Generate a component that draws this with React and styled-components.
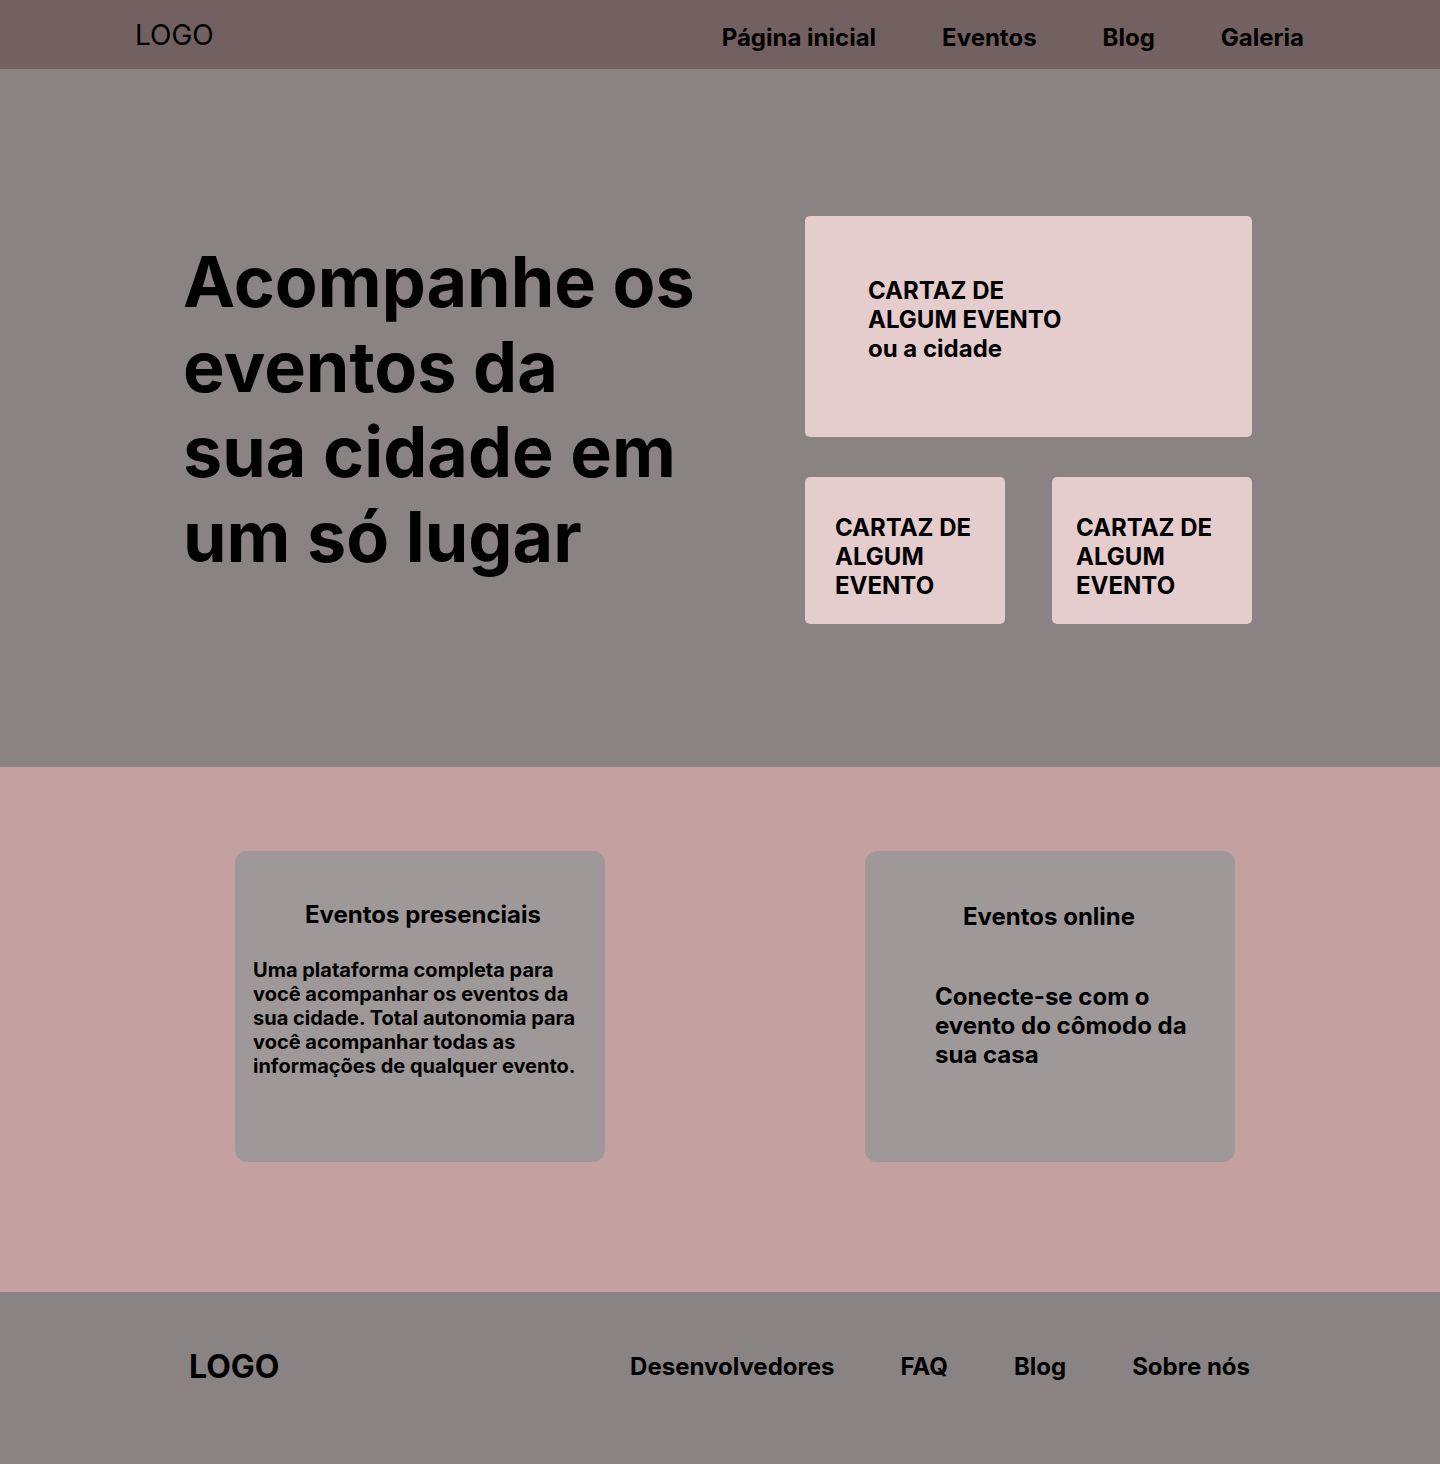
import React from "react";
import styled, { createGlobalStyle } from "styled-components";

const GlobalStyle = createGlobalStyle`
  *, *::before, *::after { box-sizing: border-box; }
  body {
    margin: 0;
    background: #898383;
    color: #000;
    font-family: Inter, "Liberation Sans", sans-serif;
  }
  h1, h2, p { margin: 0; padding: 0; }
`;

const Header = styled.header`
  display: flex;
  align-items: flex-end;
  justify-content: space-between;
  flex-wrap: wrap;
  min-height: 69px;
  padding: 0 136px 17px 135px;
  background: #736060;
`;

const Logo = styled.a`
  color: inherit;
  text-decoration: none;
  font-size: ${(p) => (p.$bold ? 32 : 28)}px;
  line-height: ${(p) => (p.$bold ? 39 : 34)}px;
  font-weight: ${(p) => (p.$bold ? 700 : 400)};
`;

const NavLinks = styled.nav`
  display: flex;
  flex-wrap: wrap;
  gap: 0 66px;
`;

const NavLink = styled.a`
  color: inherit;
  text-decoration: none;
  font-size: 24px;
  line-height: 29px;
  font-weight: 700;
`;

const Hero = styled.section`
  display: flex;
  justify-content: space-between;
  gap: 40px;
  padding: 147px 188px 143px 183px;
  background: #898383;
`;

const HeroTitle = styled.h1`
  max-width: 540px;
  padding-top: 23px;
  font-size: 70px;
  line-height: 85px;
  font-weight: 700;
`;

const Posters = styled.div`
  display: grid;
  grid-template-columns: 200px 200px;
  gap: 40px 47px;
  align-content: start;
`;

const Poster = styled.article`
  min-height: ${(p) => (p.$wide ? 221 : 147)}px;
  grid-column: ${(p) => (p.$wide ? "1 / -1" : "auto")};
  padding: ${(p) => p.$pad};
  border-radius: 5px;
  background: #e5cdcd;
  font-size: 24px;
  line-height: 29px;
  font-weight: 700;
`;

const Features = styled.section`
  display: flex;
  justify-content: space-between;
  align-items: flex-start;
  gap: 40px;
  padding: 84px 205px 130px 235px;
  background: #c4a0a0;
`;

const Feature = styled.article`
  width: 370px;
  min-height: 311px;
  padding: ${(p) => p.$pad};
  border-radius: 12px;
  background: #9e9898;
`;

const FeatureTitle = styled.h2`
  padding-left: ${(p) => p.$indent}px;
  font-size: 24px;
  line-height: 29px;
  font-weight: 700;
`;

const FeatureText = styled.p`
  margin-top: ${(p) => (p.$large ? 51 : 29)}px;
  font-size: ${(p) => (p.$large ? 24 : 20)}px;
  line-height: ${(p) => (p.$large ? 29 : 24)}px;
  font-weight: 700;
`;

const Footer = styled.footer`
  display: flex;
  align-items: center;
  justify-content: space-between;
  flex-wrap: wrap;
  padding: 55px 190px 78px 189px;
  background: #898383;
`;

export default function App() {
  return (
    <>
      <GlobalStyle />
      <Header>
        <Logo href="#">LOGO</Logo>
        <NavLinks aria-label="Principal">
          <NavLink href="#">Página inicial</NavLink>
          <NavLink href="#eventos">Eventos</NavLink>
          <NavLink href="#blog">Blog</NavLink>
          <NavLink href="#galeria">Galeria</NavLink>
        </NavLinks>
      </Header>
      <main>
        <Hero>
          <HeroTitle>
            Acompanhe os<br />eventos da<br />sua cidade em<br />um só lugar
          </HeroTitle>
          <Posters>
            <Poster $wide $pad="60px 63px">
              CARTAZ DE<br />ALGUM EVENTO<br />ou a cidade
            </Poster>
            <Poster $pad="36px 20px 24px 30px">CARTAZ DE ALGUM EVENTO</Poster>
            <Poster $pad="36px 24px 24px">CARTAZ DE ALGUM EVENTO</Poster>
          </Posters>
        </Hero>
        <Features id="eventos">
          <Feature $pad="49px 18px">
            <FeatureTitle $indent={52}>Eventos presenciais</FeatureTitle>
            <FeatureText>
              Uma plataforma completa para você acompanhar os eventos da sua
              cidade. Total autonomia para você acompanhar todas as
              informações de qualquer evento.
            </FeatureText>
          </Feature>
          <Feature $pad="51px 40px 51px 70px">
            <FeatureTitle $indent={28}>Eventos online</FeatureTitle>
            <FeatureText $large>
              Conecte-se com o evento do cômodo da sua casa
            </FeatureText>
          </Feature>
        </Features>
      </main>
      <Footer>
        <Logo $bold href="#">LOGO</Logo>
        <NavLinks aria-label="Rodapé">
          <NavLink href="#desenvolvedores">Desenvolvedores</NavLink>
          <NavLink href="#faq">FAQ</NavLink>
          <NavLink href="#blog">Blog</NavLink>
          <NavLink href="#sobre">Sobre nós</NavLink>
        </NavLinks>
      </Footer>
    </>
  );
}
